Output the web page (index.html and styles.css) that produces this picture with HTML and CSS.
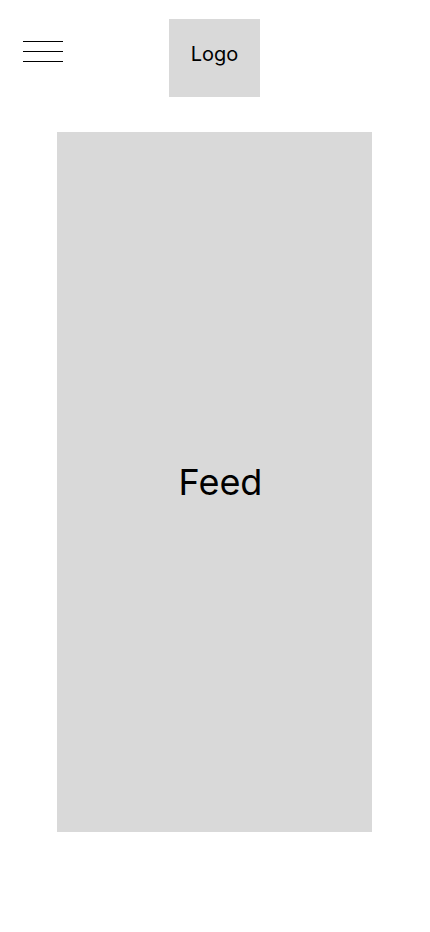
FILE: index.html
```html
<!DOCTYPE html>
<html lang="en">
<head>
<meta charset="utf-8">
<meta name="viewport" content="width=device-width, initial-scale=1">
<title>Feed</title>
<link rel="stylesheet" href="styles.css">
</head>
<body>
<header class="header">
  <div class="menu" aria-label="Menu">
    <span class="menu-line"></span>
    <span class="menu-line"></span>
    <span class="menu-line"></span>
  </div>
  <div class="logo">Logo</div>
  <div class="spacer"></div>
</header>
<main class="main">
  <section class="feed">Feed</section>
</main>
</body>
</html>
```
FILE: styles.css
```css
* { box-sizing: border-box; }
html, body { margin: 0; padding: 0; background: #ffffff; }
body {
  font-family: Inter, "Noto Sans", sans-serif;
  color: #000000;
  width: 430px;
}
.header {
  display: grid;
  grid-template-columns: 169px 91px 1fr;
  padding-top: 19px;
}
.menu {
  display: flex;
  flex-direction: column;
  gap: 9px;
  margin-top: 22px;
  margin-left: 23px;
  width: 40px;
  align-self: start;
}
.menu-line {
  display: block;
  width: 40px;
  height: 1px;
  background: #000000;
}
.logo {
  width: 91px;
  height: 78px;
  background: #d9d9d9;
  display: flex;
  align-items: center;
  justify-content: center;
  font-size: 20px;
  padding-bottom: 8px;
}
.main {
  display: flex;
  justify-content: center;
  padding-top: 35px;
}
.feed {
  width: 315px;
  height: 700px;
  background: #d9d9d9;
  display: flex;
  align-items: center;
  justify-content: center;
  font-size: 36px;
  padding-left: 12px;
  margin-right: 1px;
}
```
